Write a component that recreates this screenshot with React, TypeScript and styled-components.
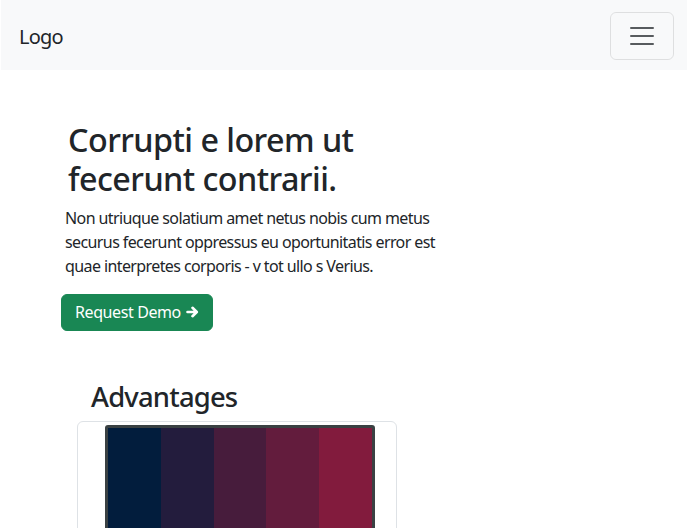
import React from "react";
import styled, { createGlobalStyle } from "styled-components";

const Global = createGlobalStyle`
  * { box-sizing: border-box; }
  body {
    margin: 0;
    background: #fff;
    color: #212529;
    font-family: "Noto Sans", "Open Sans", sans-serif;
    font-size: 16px;
    line-height: 1.5;
  }
`;

const Navbar = styled.nav`
  margin-left: 1px;
  height: 70px;
  background: #f8f9fa;
  display: flex;
  align-items: center;
  justify-content: space-between;
  padding: 0 13px 0 18px;
`;

const Brand = styled.a`
  font-size: 20px;
  line-height: 30px;
  letter-spacing: -0.8px;
  color: #212529;
  text-decoration: none;
  margin-top: 4px;
`;

const Toggler = styled.button`
  width: 64px;
  height: 48px;
  margin-top: 2px;
  padding: 0;
  display: flex;
  align-items: center;
  justify-content: center;
  background: transparent;
  border: 1px solid rgba(0, 0, 0, 0.1);
  border-radius: 6px;
`;

const Hero = styled.section`
  padding: 50px 0 0 61px;
  width: 470px;
`;

const Title = styled.h1`
  margin: 0 0 8px;
  padding-left: 7px;
  font-size: 32.3px;
  font-weight: 500;
  line-height: 1.2;
  letter-spacing: -0.55px;
  width: 380px;
`;

const Lead = styled.p`
  margin: 0 0 16px;
  padding-left: 4px;
  font-size: 16px;
  line-height: 24px;
  letter-spacing: -0.6px;
  width: 400px;
`;

const DemoButton = styled.button`
  height: 37px;
  padding: 0 13px;
  display: inline-flex;
  align-items: center;
  gap: 5px;
  background: #198754;
  border: 1px solid #198754;
  border-radius: 6px;
  color: #fff;
  font-family: inherit;
  font-size: 16px;
  line-height: 24px;
  letter-spacing: -0.4px;
`;

const Advantages = styled.section`
  padding: 50px 0 0 77px;
`;

const SectionTitle = styled.h2`
  margin: 0 0 8px 14px;
  font-size: 27.4px;
  font-weight: 500;
  line-height: 1.2;
  letter-spacing: -0.8px;
`;

const Card = styled.div`
  width: 320px;
  border: 1px solid #dee2e6;
  border-radius: 6px;
  padding: 3px 0 0 27px;
  height: 120px;
  overflow: hidden;
`;

const Picture = styled.div`
  width: 270px;
  height: 200px;
  border: 3px solid #3a4143;
  border-radius: 3px;
  display: flex;
  overflow: hidden;
`;

const Stripe = styled.div<{ $c: string }>`
  flex: 1;
  background: ${(p) => p.$c};
`;

const stripes = ["#021d3d", "#231c3d", "#471c3c", "#631c3d", "#821b3d"];

export default function App() {
  return (
    <>
      <Global />
      <Navbar>
        <Brand href="#">Logo</Brand>
        <Toggler aria-label="Toggle navigation">
          <svg width="30" height="30" viewBox="0 0 30 30">
            <path
              d="M4 7h22M4 15h22M4 23h22"
              stroke="rgba(33,37,41,0.75)"
              strokeWidth="2"
              strokeLinecap="round"
            />
          </svg>
        </Toggler>
      </Navbar>
      <Hero>
        <Title>Corrupti e lorem ut fecerunt contrarii.</Title>
        <Lead>
          Non utriuque solatium amet netus nobis cum metus securus fecerunt
          oppressus eu oportunitatis error est quae interpretes corporis - v tot
          ullo s Verius.
        </Lead>
        <DemoButton>
          Request Demo
          <svg width="13" height="12" viewBox="0 0 13 12" aria-hidden="true">
            <path
              d="M1.5 6h9M6.5 1.8L10.8 6 6.5 10.2"
              stroke="#fff"
              strokeWidth="2.6"
              fill="none"
              strokeLinecap="round"
              strokeLinejoin="round"
            />
          </svg>
        </DemoButton>
      </Hero>
      <Advantages>
        <SectionTitle>Advantages</SectionTitle>
        <Card>
          <Picture>
            {stripes.map((c) => (
              <Stripe key={c} $c={c} />
            ))}
          </Picture>
        </Card>
      </Advantages>
    </>
  );
}
